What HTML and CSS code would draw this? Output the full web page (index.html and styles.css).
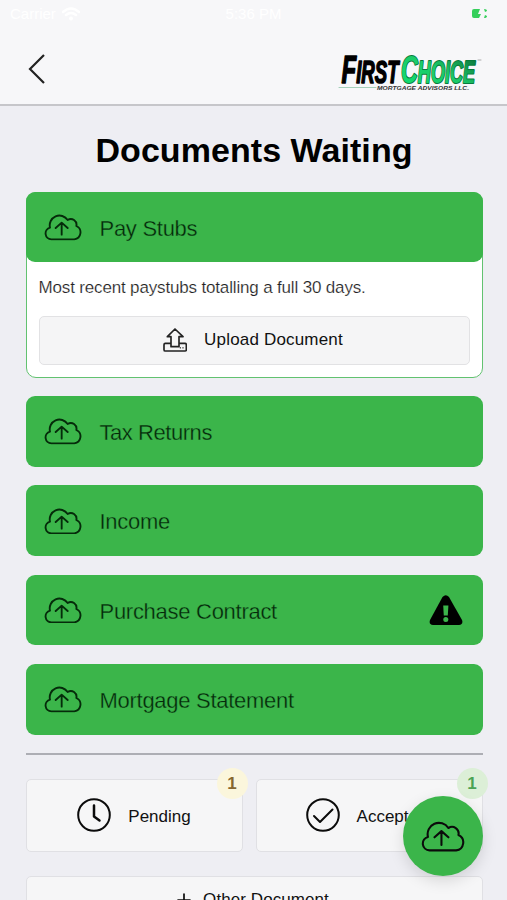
FILE: index.html
```html
<!DOCTYPE html>
<html lang="en">
<head>
<meta charset="utf-8">
<title>Documents Waiting</title>
<link rel="stylesheet" href="styles.css">
</head>
<body>
<svg class="defs" aria-hidden="true">
  <symbol id="cloud" viewBox="0 0 114 80">
    <path d="M22 76A17.800 17.800 0 0 1 18 41A29.300 29.300 0 0 1 71 18A17 17 0 0 1 97 36A21 21 0 0 1 91 76ZM53 62V26M35 42L53 26L71 42"/>
  </symbol>
</svg>
<div class="screen">
  <header class="header">
    <div class="status">
      <span class="carrier">Carrier
        <svg class="wifi" viewBox="0 0 18 14"><path d="M1 5Q9-2 17 5M4 8Q9 4 14 8"/><circle cx="9" cy="11.5" r="2"/></svg>
      </span>
      <span class="time">5:36 PM</span>
      <svg class="battery" viewBox="0 0 18 12"><path d="M3 1H9L7 6H10L8 10H3Q1 10 1 8V3Q1 1 3 1ZM13 1Q16 1 16 3L14 4ZM13 10Q16 10 16 8L14 7Z"/></svg>
    </div>
    <div class="nav">
      <svg class="back" viewBox="0 0 18 32"><path d="M16 2L2 16L16 30"/></svg>
      <svg class="logo" viewBox="0 0 144 42">
        <defs>
          <linearGradient id="shine" x1="0" y1="1" x2="1" y2="0">
            <stop offset="0" stop-color="#0fe070"/><stop offset=".5" stop-color="#1cc968"/><stop offset="1" stop-color="#04572b"/>
          </linearGradient>
        </defs>
        <text class="ink" x="2.500" y="32.500" textLength="57" lengthAdjust="spacingAndGlyphs"><tspan class="cap">F</tspan>IRST</text>
        <text class="shiny" x="62" y="32.500" textLength="74" lengthAdjust="spacingAndGlyphs"><tspan class="cap">C</tspan>HOICE</text>
        <path class="rule" d="M0 37.5H37"/>
        <text class="tag" x="38" y="39.600" textLength="92" lengthAdjust="spacingAndGlyphs">MORTGAGE ADVISORS LLC.</text>
        <path class="tm" d="M139 10H142"/>
      </svg>
    </div>
  </header>
  <main class="content">
    <h1>Documents Waiting</h1>
    <section class="open">
      <div class="bar"><svg class="cloud"><use href="#cloud"/></svg><span>Pay Stubs</span></div>
      <div class="details">
        <p>Most recent paystubs totalling a full 30 days.</p>
        <div class="upload">
          <svg class="tray" viewBox="0 0 72 72"><path d="M24 56V26H13L36 3L60 26H48V56ZM24 46H7Q3 46 3 50V65Q3 69 7 69H66Q70 69 70 65V50Q70 46 66 46H48"/><path class="dots" d="M52 59V60M60 59V60"/></svg>
          <span>Upload Document</span>
        </div>
      </div>
    </section>
    <div class="bar"><svg class="cloud"><use href="#cloud"/></svg><span class="tight">Tax Returns</span></div>
    <div class="bar"><svg class="cloud"><use href="#cloud"/></svg><span>Income</span></div>
    <div class="bar"><svg class="cloud"><use href="#cloud"/></svg><span>Purchase Contract</span>
      <svg class="warn" viewBox="0 0 34 30"><path d="M13.5 2Q16.800-1.500 20 2L33 25Q34.500 29.500 30 30H4Q-.5 29.500 1 25Z"/><path class="mark" d="M14.200 10.500H19.400L18.800 20.500H14.800Z"/><circle class="mark" cx="16.800" cy="24.500" r="2.500"/></svg>
    </div>
    <div class="bar"><svg class="cloud"><use href="#cloud"/></svg><span>Mortgage Statement</span></div>
    <hr>
    <div class="tiles">
      <div class="tile">
        <svg class="ring" viewBox="0 0 34 34"><circle cx="17" cy="17" r="15.800"/><path class="thick" d="M17 7.500V18.500L22.500 22.500"/></svg>
        <span>Pending</span><b class="badge">1</b>
      </div>
      <div class="tile accepted">
        <svg class="ring" viewBox="0 0 34 34"><circle cx="17" cy="17" r="15.800"/><path d="M8 18L14 24L26.500 11.500"/></svg>
        <span>Accepted</span><b class="badge">1</b>
      </div>
    </div>
    <div class="other"><svg class="plus" viewBox="0 0 14 14"><path d="M7 1V13M1 7H13"/></svg><span>Other Document</span></div>
  </main>
  <div class="fab"><svg><use href="#cloud"/></svg></div>
</div>
</body>
</html>
```

FILE: styles.css
```css
* { box-sizing: border-box; }
body { margin: 0; font-family: "Liberation Sans", Arial, sans-serif; color: #111; }
svg { display: block; flex: none; fill: none; stroke: #0b0b0b; stroke-linecap: round; stroke-linejoin: round; }
.defs { position: absolute; width: 0; height: 0; }
.screen { position: relative; height: 900px; overflow: hidden; background: #eeeef3; }

.header { height: 106px; background: #f7f7f9; border-bottom: 2px solid #c6c6ca; }
.status { display: grid; grid-template-columns: 1fr auto 1fr; align-items: center; height: 27px; padding: 0 18px 0 10px; color: #fff; font-size: 15px; }
.time { margin-left: 8px; }
.carrier { display: flex; gap: 6px; align-items: center; }
.wifi { width: 18px; height: 14px; stroke: #fff; stroke-width: 2.5; }
.wifi circle { fill: #fff; stroke: none; }
.battery { justify-self: end; width: 18px; height: 12px; fill: #35cf5b; stroke: none; }
.nav { display: flex; justify-content: space-between; padding: 23px 24px 0 28px; }
.back { width: 18px; height: 32px; margin-top: 3px; stroke: #222; stroke-width: 2.2; stroke-linecap: butt; stroke-linejoin: miter; }
.logo { width: 144px; height: 42px; font-family: "Liberation Sans Narrow", "Liberation Sans", sans-serif; font-size: 30.500px; font-weight: bold; font-style: italic; overflow: visible; }
.cap { font-size: 39.500px; }
.ink { fill: #000; stroke: #000; stroke-width: 1.600; }
.shiny { fill: url(#shine); stroke: #087a3c; stroke-width: 2.200; paint-order: stroke; }
.rule { stroke: #8fc5aa; stroke-width: .8; }
.tm { stroke: #999; stroke-width: .8; }
.tag { fill: #333; stroke: none; font-family: "Liberation Sans", sans-serif; font-size: 5.4px; }

.content { display: flex; flex-direction: column; padding: 0 24.5px 0 25.500px; }
h1 { margin: 25px 0 22.400px; font-size: 34px; line-height: 39px; letter-spacing: .06px; text-align: center; color: #000; }
.bar { display: flex; align-items: center; height: 70.800px; margin-bottom: 18.400px; padding: 0 19.500px 0 19px; border-radius: 9px; background: #3bb54a; color: #05280b; font-size: 22px; letter-spacing: -.28px; }
.bar span { margin-left: 17px; padding-top: 3px; -webkit-text-stroke: .35px #3bb54a; }
.bar .tight { letter-spacing: -.45px; }
.cloud { width: 38px; height: 26.700px; margin-left: -.5px; margin-right: .5px; stroke: #052b0a; stroke-width: 5.600; }
.warn { width: 34px; height: 30px; margin-left: auto; fill: #000; stroke: none; }
.warn .mark { fill: #3bb54a; }

.open { height: 185.500px; margin-bottom: 18.400px; border: 1.500px solid #62c270; border-radius: 10px; background: #fff; }
.open .bar { height: 70px; margin: -1px -1px 0; }
.details { padding: 16px 12px 0; }
p { margin: 0 0 17.500px; font-size: 17px; line-height: 20px; letter-spacing: -.16px; color: #222; -webkit-text-stroke: .2px #fff; }
.upload { display: flex; align-items: center; justify-content: center; gap: 17px; height: 49px; padding-right: 2px; border: 1.500px solid #e2e2e4; border-radius: 5px; background: #f5f5f6; font-size: 17px; letter-spacing: .18px; }
.tray { width: 24px; height: 24px; stroke: #222; stroke-width: 5; }
.dots { stroke-width: 3.500; }

hr { width: 100%; height: 1.500px; margin: 0 0 24.500px; border: 0; background: #adaeb4; }
.tiles { display: flex; gap: 13px; }
.tile, .other { display: flex; align-items: center; justify-content: center; border: 1px solid #e0e0e4; border-radius: 5px; background: #f6f6f7; font-size: 17px; }
.tile { position: relative; gap: 17px; width: 217px; height: 73px; }
.tile span { padding-top: 3px; }
.tile .ring { margin-top: -1.500px; }
.accepted { width: 227px; padding-right: 5px; }
.ring { width: 34px; height: 34px; stroke-width: 2; }
.ring .thick { stroke-width: 2.500; }
.badge { position: absolute; top: -12px; right: -6px; width: 31px; height: 31px; border-radius: 50%; background: #fbf6dc; color: #86672f; line-height: 32px; text-align: center; }
.accepted .badge { background: #dcefd7; color: #4ba354; }
.other { height: 48px; margin-top: 24px; padding-right: 2px; gap: 12px; letter-spacing: .08px; }
.plus { width: 14px; height: 14px; stroke-width: 1.700; }
.fab { position: absolute; left: 403px; top: 796px; display: flex; align-items: center; justify-content: center; width: 80px; height: 80px; border-radius: 50%; background: #3bb54a; box-shadow: 0 5px 15px rgba(0, 0, 0, .13); }
.fab svg { width: 44px; height: 31px; margin-right: 1px; stroke-width: 5.400; }
```
